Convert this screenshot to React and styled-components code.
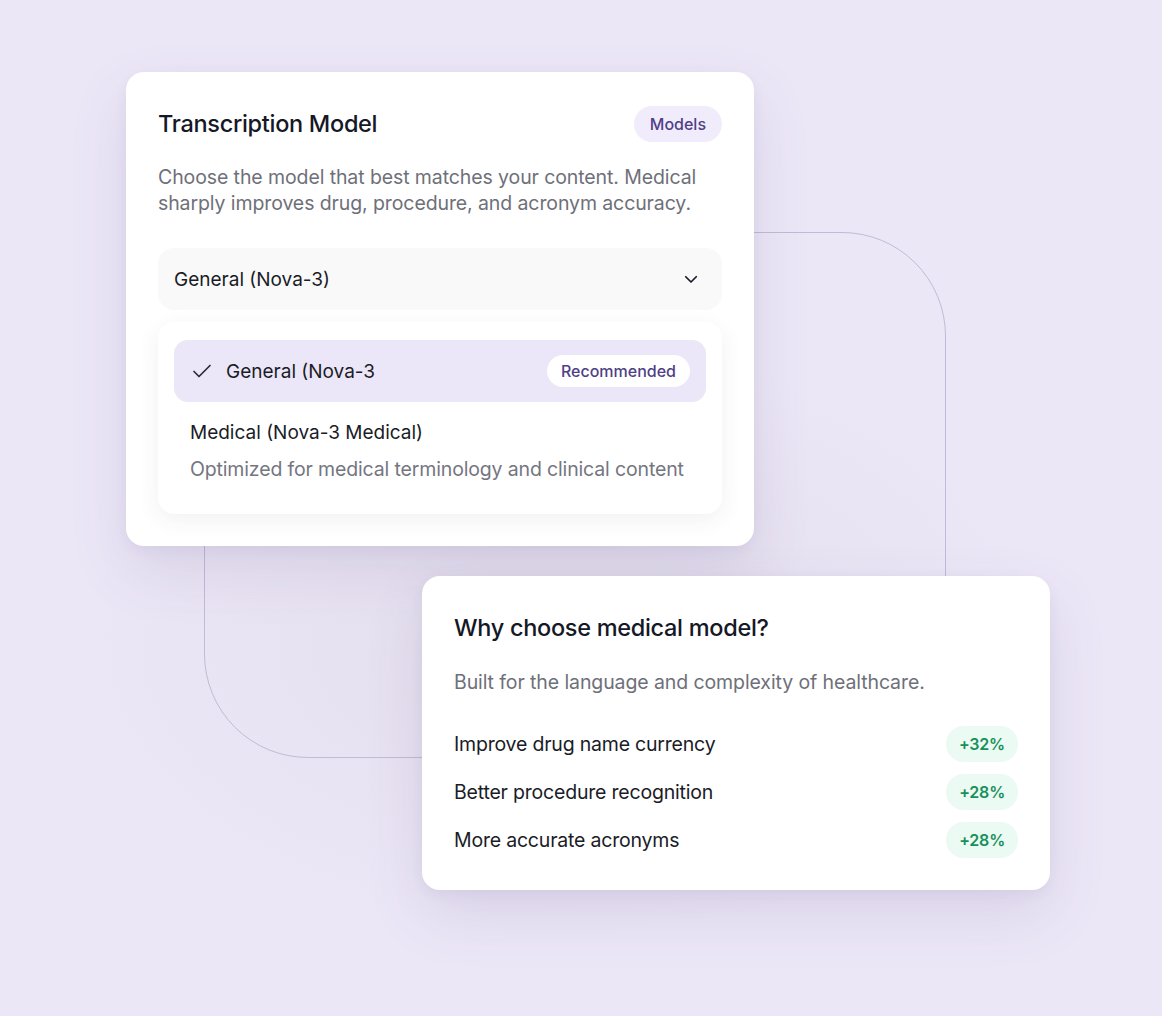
import React from "react";
import styled, { createGlobalStyle } from "styled-components";

const Global = createGlobalStyle`
  html, body { margin: 0; padding: 0; }
  body {
    background: #ECE7F7;
    font-family: Inter, "Noto Sans", "Liberation Sans", sans-serif;
    -webkit-font-smoothing: antialiased;
  }
`;

const Stage = styled.div`
  position: relative;
  width: 1162px;
  height: 1016px;
  overflow: hidden;
  background: radial-gradient(ellipse 700px 420px at 560px 640px, #E3DEEC 0%, rgba(227,222,236,0) 70%), #ECE7F7;
  display: flex;
  flex-direction: column;
  padding: 72px 0 0 126px;
  box-sizing: border-box;
`;

const Outline = styled.div`
  position: absolute;
  left: 204px;
  top: 232px;
  width: 742px;
  height: 526px;
  border: 1.5px solid #C2BAD6;
  border-radius: 104px;
  box-sizing: border-box;
  z-index: 0;
`;

const Card = styled.div`
  position: relative;
  z-index: 1;
  width: 628px;
  box-sizing: border-box;
  background: #fff;
  border-radius: 18px;
  padding: ${(p) => p.$pad};
  margin-left: ${(p) => p.$offset || 0}px;
  margin-top: ${(p) => p.$top || 0}px;
  box-shadow: 0 24px 60px rgba(80, 60, 120, 0.12), 0 4px 14px rgba(80, 60, 120, 0.05);
`;

const Header = styled.div`
  display: flex;
  align-items: center;
  justify-content: space-between;
  height: 36px;
`;

const Title = styled.h2`
  margin: 0;
  font-size: 23.5px;
  font-weight: 500;
  color: #151826;
  letter-spacing: -0.3px;
  line-height: 32px;
`;

const Pill = styled.span`
  display: inline-flex;
  align-items: center;
  height: ${(p) => p.$h}px;
  padding: 0 ${(p) => p.$px}px;
  border-radius: 999px;
  background: ${(p) => p.$bg};
  color: ${(p) => p.$color};
  font-size: ${(p) => p.$fs || 16}px;
  font-weight: ${(p) => p.$weight || 450};
`;

const Desc = styled.p`
  margin: ${(p) => p.$m};
  font-size: 19.5px;
  line-height: 26px;
  color: #6E7079;
  letter-spacing: -0.1px;
`;

const Select = styled.div`
  display: flex;
  align-items: center;
  justify-content: space-between;
  height: 62px;
  padding: 0 22px 0 16px;
  margin-top: 32px;
  border-radius: 16px;
  background: #F9F9FA;
  font-size: 19px;
  color: #1A1C26;
`;

const Menu = styled.div`
  margin-top: 12px;
  background: #fff;
  border-radius: 16px;
  padding: 18px 16px 32px;
  box-shadow: 0 6px 22px rgba(60, 50, 90, 0.07);
  display: flex;
  flex-direction: column;
`;

const Option = styled.div`
  display: flex;
  align-items: center;
  gap: 12px;
  height: 62px;
  padding: 0 16px;
  border-radius: 14px;
  background: #ECE7F8;
  font-size: 19px;
  color: #1A1C26;
`;

const OptLabel = styled.span`
  flex: 1;
`;

const OptionPlain = styled.div`
  padding: 18px 16px 0;
  display: flex;
  flex-direction: column;
  gap: 10px;
`;

const OptTitle = styled.div`
  font-size: 19px;
  line-height: 26px;
  color: #1A1C26;
`;

const OptDesc = styled.div`
  font-size: 19.5px;
  line-height: 26px;
  color: #74767F;
  letter-spacing: -0.15px;
`;

const List = styled.div`
  margin-top: 31px;
  display: flex;
  flex-direction: column;
  gap: 12px;
`;

const Row = styled.div`
  display: flex;
  align-items: center;
  justify-content: space-between;
  height: 36px;
  font-size: 19.5px;
  color: #1A1C26;
  letter-spacing: -0.2px;
`;

const rows = [
  ["Improve drug name currency", "+32%"],
  ["Better procedure recognition", "+28%"],
  ["More accurate acronyms", "+28%"],
];

export default function App() {
  return (
    <>
      <Global />
      <Stage>
        <Outline />
        <Card $pad="34px 32px 32px">
          <Header>
            <Title>Transcription Model</Title>
            <Pill $h={36} $px={16} $bg="#F1ECFB" $color="#4F3F86">Models</Pill>
          </Header>
          <Desc $m="22px 0 0">
            Choose the model that best matches your content. Medical sharply improves drug, procedure, and acronym accuracy.
          </Desc>
          <Select>
            <span>General (Nova-3)</span>
            <svg width="18" height="18" viewBox="0 0 24 24" fill="none" stroke="#1A1C26" strokeWidth="2.3" strokeLinecap="round" strokeLinejoin="round">
              <path d="M5 9l7 7 7-7" />
            </svg>
          </Select>
          <Menu>
            <Option>
              <svg width="24" height="24" viewBox="0 0 24 24" fill="none" stroke="#2A2C36" strokeWidth="1.7" strokeLinecap="round" strokeLinejoin="round">
                <path d="M4 12.5l5 5L20 6.5" />
              </svg>
              <OptLabel>General (Nova-3</OptLabel>
              <Pill $h={32} $px={14} $bg="#FFFFFF" $color="#4F3F86">Recommended</Pill>
            </Option>
            <OptionPlain>
              <OptTitle>Medical (Nova-3 Medical)</OptTitle>
              <OptDesc>Optimized for medical terminology and clinical content</OptDesc>
            </OptionPlain>
          </Menu>
        </Card>
        <Card $pad="36px 32px 32px" $offset={296} $top={30}>
          <Title>Why choose medical model?</Title>
          <Desc $m="25px 0 0">Built for the language and complexity of healthcare.</Desc>
          <List>
            {rows.map(([label, val], i) => (
              <Row key={i}>
                <span>{label}</span>
                <Pill $h={36} $px={13} $fs={16} $bg="#EBFAF2" $color="#16915A" $weight={600}>{val}</Pill>
              </Row>
            ))}
          </List>
        </Card>
      </Stage>
    </>
  );
}
